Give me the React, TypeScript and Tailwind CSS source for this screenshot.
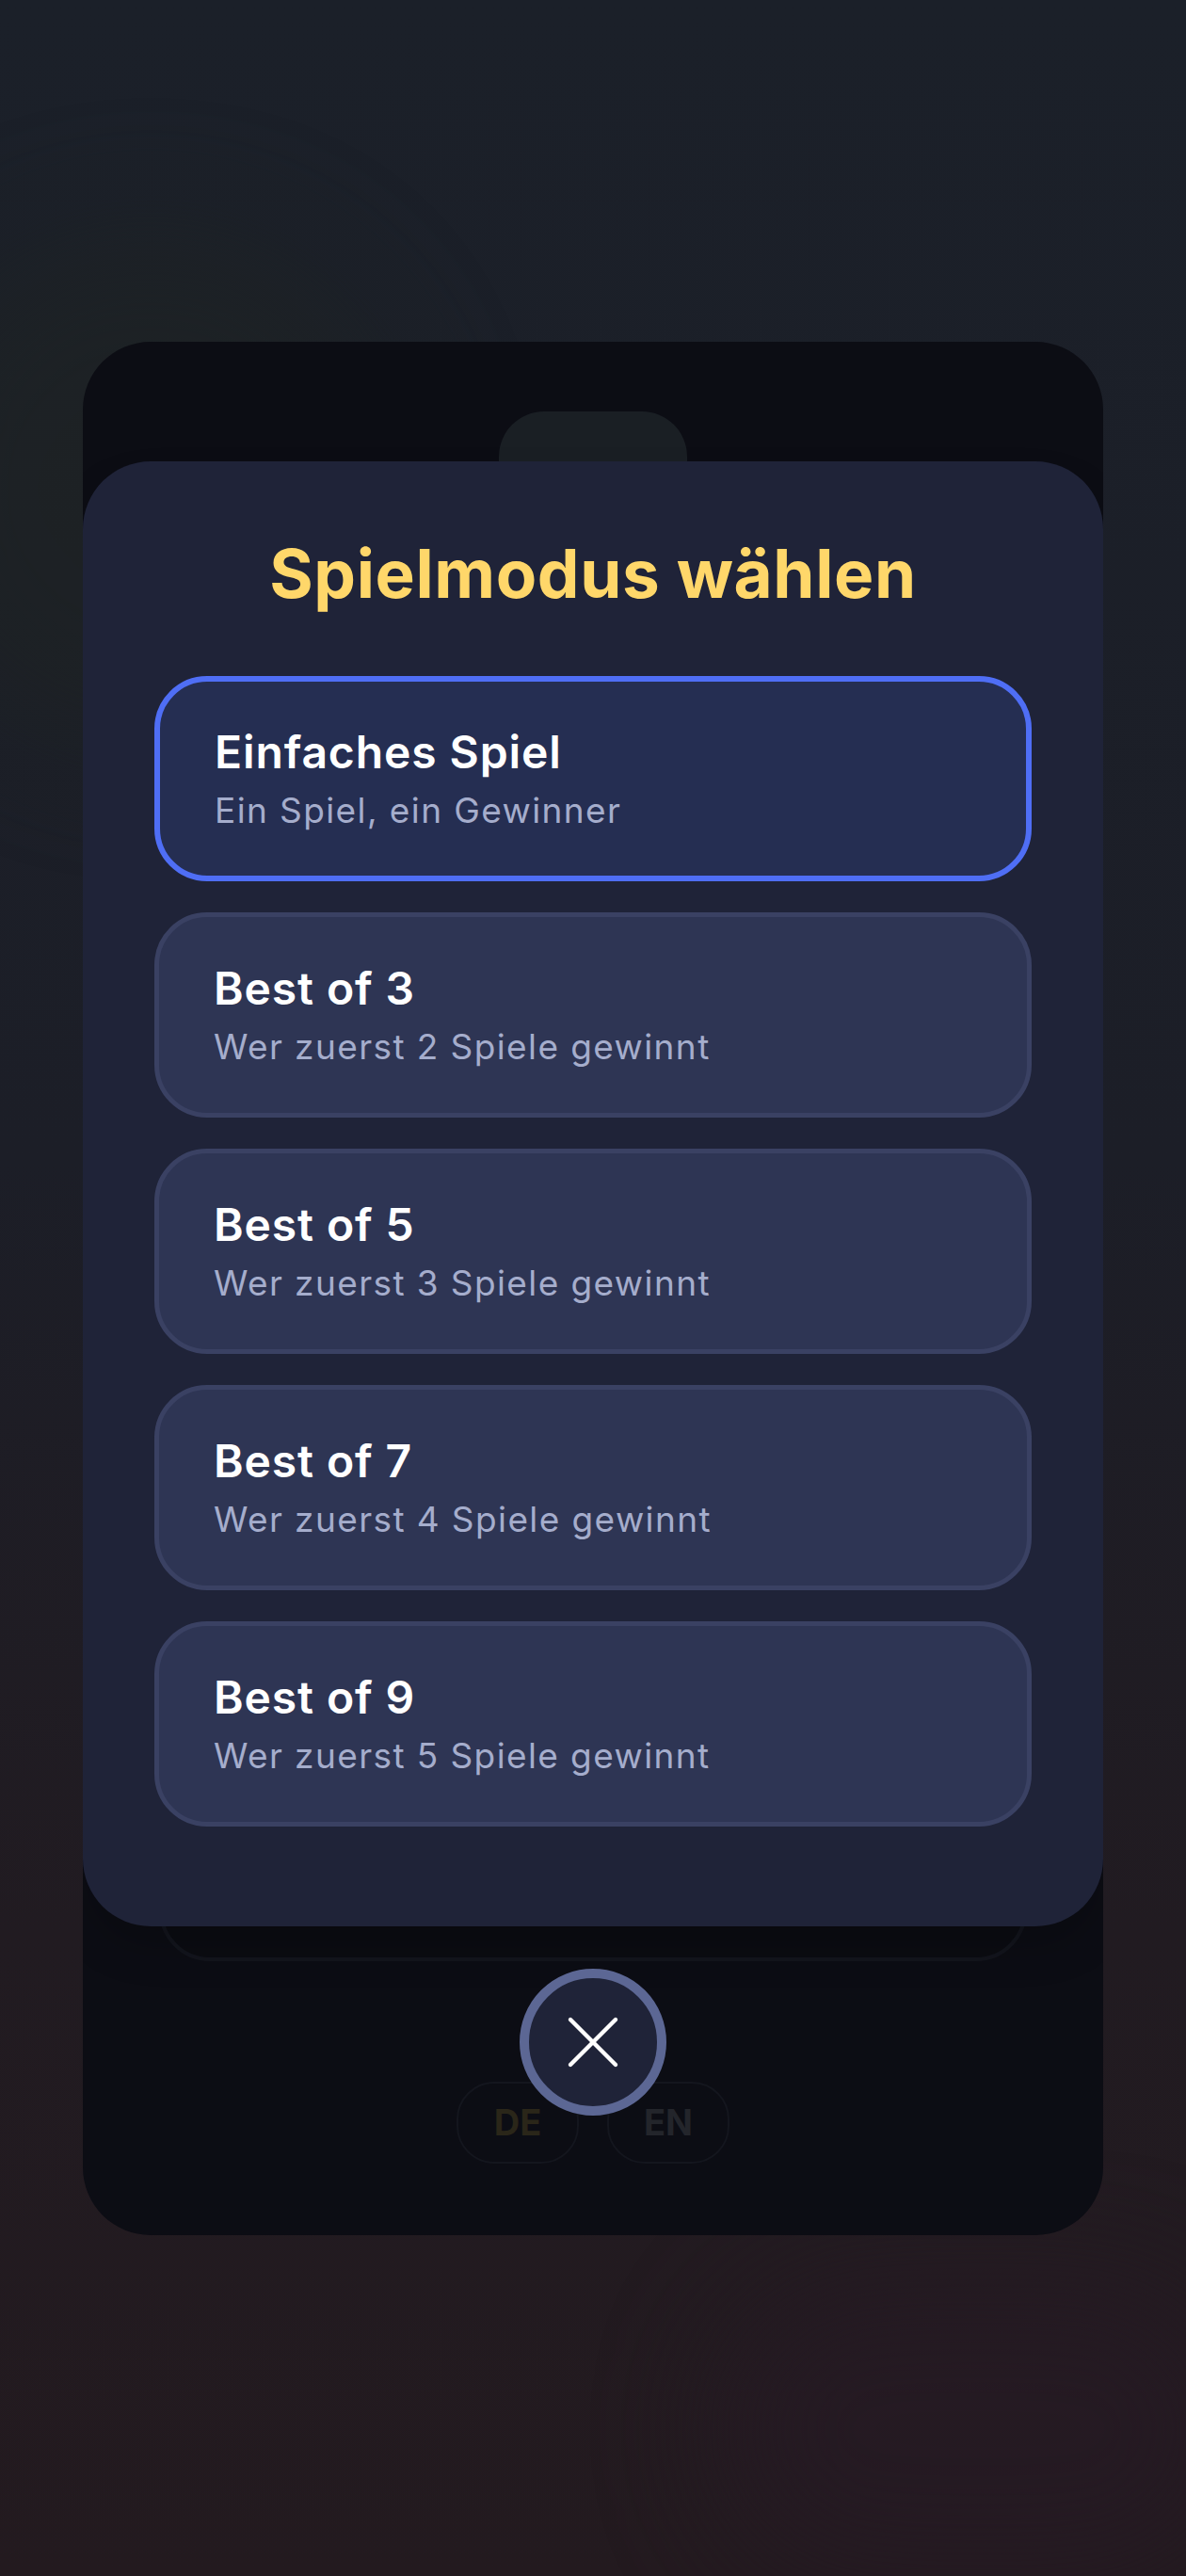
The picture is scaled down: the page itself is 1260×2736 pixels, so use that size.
import { X } from "lucide-react";

interface Mode {
  id: string;
  title: string;
  subtitle: string;
}

const modes: Mode[] = [
  { id: "single", title: "Einfaches Spiel", subtitle: "Ein Spiel, ein Gewinner" },
  { id: "bo3", title: "Best of 3", subtitle: "Wer zuerst 2 Spiele gewinnt" },
  { id: "bo5", title: "Best of 5", subtitle: "Wer zuerst 3 Spiele gewinnt" },
  { id: "bo7", title: "Best of 7", subtitle: "Wer zuerst 4 Spiele gewinnt" },
  { id: "bo9", title: "Best of 9", subtitle: "Wer zuerst 5 Spiele gewinnt" },
];

export default function App() {
  const selected = "single";

  return (
    <div
      className="min-h-[2736px] w-full flex items-center justify-center bg-[linear-gradient(180deg,#1b2029_0%,#1c1e27_45%,#211b21_75%,#231a1f_100%)] relative overflow-hidden"
      style={{ fontFamily: "Inter, 'Noto Sans', sans-serif" }}
    >
      {/* faint background blobs */}
      <div className="absolute left-[-120px] top-[240px] w-[560px] h-[560px] rounded-full bg-[#1f2422] opacity-50 blur-3xl" />
      <div className="absolute right-[-60px] top-[2420px] w-[560px] h-[320px] rounded-full bg-[#261a24] opacity-70 blur-3xl" />

      {/* phone / screen behind the modal */}
      <div className="relative w-[1084px] h-[2011px] rounded-[72px] bg-[#0c0d14] overflow-hidden">
        {/* underlying dimmed content */}
        <div className="flex flex-col items-center pt-[74px] h-full">
          <div className="w-[200px] h-[140px] rounded-[48px] bg-[#1a1f24]" />
          <div className="mt-[1186px] w-[922px] h-[320px] rounded-[54px] border-4 border-[#13151d] bg-[#0b0c12]" />
          <div className="mt-[128px] flex gap-[30px]">
            <div className="w-[130px] h-[87px] rounded-[40px] border-2 border-[#14161e] flex items-center justify-center text-[38px] font-bold text-[#2a2619]">
              DE
            </div>
            <div className="w-[130px] h-[87px] rounded-[40px] border-2 border-[#14161e] flex items-center justify-center text-[38px] font-bold text-[#23252b]">
              EN
            </div>
          </div>
        </div>

        {/* overlay layer */}
        <div className="absolute inset-0 flex flex-col items-center pt-[127px]">
          <div className="w-full h-[1556px] rounded-[72px] bg-[#1f2338] px-[76px] pt-[77px] shadow-2xl">
            <h1 className="text-center text-[71px] leading-[84px] font-bold text-[#ffd76a] tracking-[0.6px]">
              Spielmodus wählen
            </h1>
            <div className="mt-[67px] flex flex-col gap-[33px]">
              {modes.map((mode) => (
                <button
                  key={mode.id}
                  className={`h-[218px] w-full rounded-[56px] text-left pl-[58px] flex flex-col justify-center gap-[10px] ${
                    selected === mode.id
                      ? "border-[6px] border-[#4f6ef5] bg-[#252e52]"
                      : "border-[5px] border-[#3a4163] bg-[#2e3554]"
                  }`}
                >
                  <span className="text-[48px] leading-[58px] font-semibold text-white tracking-[0.9px]">
                    {mode.title}
                  </span>
                  <span className="text-[37px] leading-[46px] text-[#a5adcc] tracking-[1.4px]">
                    {mode.subtitle}
                  </span>
                </button>
              ))}
            </div>
          </div>

          <button className="mt-[45px] w-[156px] h-[156px] rounded-full border-[10px] border-[#5c6794] bg-[#1f2338] flex items-center justify-center">
            <X className="w-[96px] h-[96px] text-white" strokeWidth={1.1} />
          </button>
        </div>
      </div>
    </div>
  );
}
